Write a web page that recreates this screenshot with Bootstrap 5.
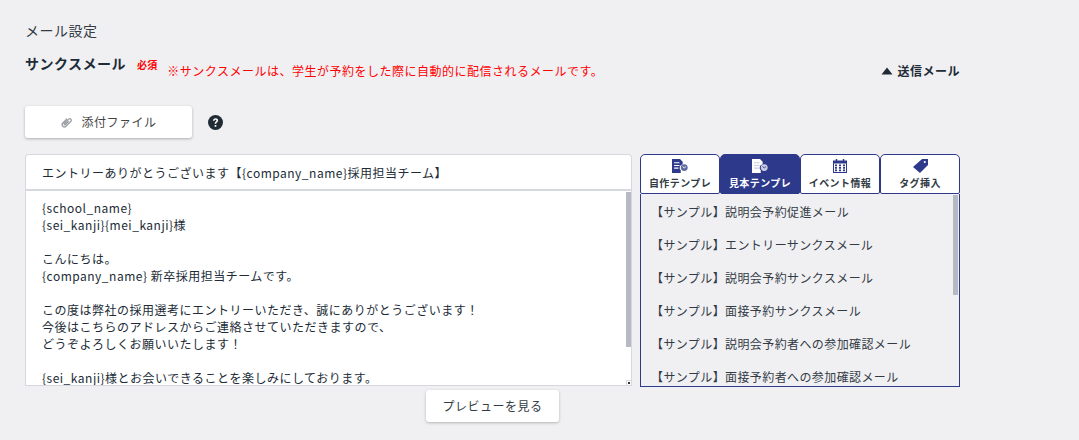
<!DOCTYPE html>
<html lang="ja">
<head>
<meta charset="utf-8">
<title>メール設定</title>
<link href="https://cdn.jsdelivr.net/npm/bootstrap@5.3.0/dist/css/bootstrap.min.css" rel="stylesheet">
<style>
html,body{height:440px;overflow:hidden}
body{background:#f0f0f3;font-family:"Noto Sans CJK JP","Noto Sans",sans-serif;color:#212b36;font-size:12px;letter-spacing:.5px}
.page-wrap{width:960px;padding:21px 0 0 25px}
.sec-title{font-size:14px;line-height:18px;font-weight:400;margin:0 0 14px;color:#333b45;letter-spacing:.5px}
.head-row{height:31px}
.thanks{font-size:14px;line-height:18px;font-weight:700;margin:1px 0 0;letter-spacing:.5px}
.req{font-size:10px;line-height:14px;font-weight:700;color:#f00;margin:5px 0 0 11px;letter-spacing:.1px}
.note{font-size:12px;line-height:17px;color:#f00;margin:9px 0 0 10px}
.send-toggle{font-size:12px;font-weight:700;color:#212b36;line-height:17px;margin-top:9px}
.attach-row{margin-top:22px}
.attach{width:167px;height:32px;background:#fff;border:0;border-radius:3px;box-shadow:0 1px 3px rgba(0,0,0,.28);font-size:12px;color:#444;padding:0;letter-spacing:.5px}
.help{margin-left:16px}
.editor-row{margin-top:16px;gap:8px}
.editor{width:607px}
.subject{height:38px;width:100%;background:#fff;border:1px solid #d5d8de;border-bottom:3px solid #d5d8de;border-radius:4px 4px 0 0;padding:0 16px;font:12px/17px "Noto Sans CJK JP",sans-serif;letter-spacing:.5px;color:#212b36;outline:0}
.body-box{margin-top:-1px}
.body-text{display:block;width:100%;height:195px;background:#fff;border:1px solid #d5d8de;border-top:0;padding:8px 16px 0;font:12px/17px "Noto Sans CJK JP",sans-serif;letter-spacing:.5px;color:#212b36;outline:0;overflow:hidden;resize:none}
.side{width:320px}
.tabs{height:40px}
.tab-btn{flex:1 1 0;height:40px;background:#fff;border:1px solid #2d3a8c;border-radius:5px 5px 2px 2px;color:#333b45;font-size:10px;font-weight:700;line-height:13px;padding:4px 0 0;display:flex;flex-direction:column;align-items:center;letter-spacing:.4px}
.tab-btn.on{background:#2d3a8c;color:#fff}
.tab-btn svg{margin-bottom:3px}
.tpl-list{height:193px;border:1px solid #2d3a8c;border-top:0;overflow:hidden;padding:9px 0 0 10px;background:#f0f0f3}
.tpl-item{font-size:12px;line-height:17px;color:#333b45;margin-bottom:16px;white-space:nowrap;letter-spacing:.4px}
.thumb-a,.thumb-b{position:absolute;background:#b4b9c3;width:5px}
.thumb-a{right:1px;top:1px;height:155px}
.thumb-b{right:1px;top:1px;height:100px}
.grip{position:absolute;right:1px;bottom:1px;width:5px;height:5px;background:#fff;border-left:1px solid #d5d8de;border-top:1px solid #d5d8de}
.grip::after{content:"";position:absolute;left:1px;top:1px;width:2px;height:2px;background:#333}
.preview-row{margin-top:3px}
.preview{width:133px;height:32px;background:#fff;border:0;border-radius:3px;box-shadow:0 1px 3px rgba(0,0,0,.25);font-size:12px;color:#333b45;padding:0;letter-spacing:.5px}
</style>
</head>
<body>
<div class="page-wrap">
  <h2 class="sec-title">メール設定</h2>
  <div class="head-row d-flex align-items-start">
    <h3 class="thanks">サンクスメール</h3>
    <span class="req">必須</span>
    <span class="note">※サンクスメールは、学生が予約をした際に自動的に配信されるメールです。</span>
    <span class="send-toggle ms-auto d-flex align-items-center gap-1">
      <svg width="12" height="8" viewBox="0 0 12 8"><path d="M6 .5 11.500 7.500H.5z" fill="#212b36"/></svg>送信メール
    </span>
  </div>
  <div class="attach-row d-flex align-items-center">
    <button type="button" class="attach d-flex align-items-center justify-content-center gap-2">
      <svg width="13" height="13" viewBox="0 0 13 13" fill="none" stroke="#9b9ea5" stroke-width="1.300"><g transform="rotate(45 6.500 6.500)"><path d="M4.300 3.500v6a2.200 2.200 0 0 0 4.400 0V2.500a1.500 1.500 0 0 0-3 0v6.300a.7.7 0 0 0 1.400 0V4"/></g></svg>添付ファイル
    </button>
    <svg class="help" width="15" height="15" viewBox="0 0 16 16"><circle cx="8" cy="8" r="8" fill="#212b36"/><path d="M5.300 6.200c0-1.700 1.200-2.700 2.800-2.700 1.500 0 2.700 1 2.700 2.300 0 2-2 1.800-2 3.500H7.100c0-2.500 1.900-2.300 1.900-3.500 0-.5-.4-.8-1-.8-.7 0-1 .5-1 1.200zM7.100 10.600h1.800v1.800H7.100z" fill="#fff"/></svg>
  </div>
  <div class="editor-row d-flex align-items-start">
    <div class="editor">
      <input class="subject d-block" type="text" value="エントリーありがとうございます【{company_name}採用担当チーム】">
      <div class="body-box position-relative">
      <textarea class="body-text">{school_name}
{sei_kanji}{mei_kanji}様

こんにちは。
{company_name} 新卒採用担当チームです。

この度は弊社の採用選考にエントリーいただき、誠にありがとうございます！
今後はこちらのアドレスからご連絡させていただきますので、
どうぞよろしくお願いいたします！

{sei_kanji}様とお会いできることを楽しみにしております。</textarea>
      <span class="thumb-a"></span><span class="grip"></span>
      </div>
    </div>
    <div class="side">
      <div class="tabs d-flex">
        <button type="button" class="tab-btn">
          <svg width="16" height="14" viewBox="0 0 15 13"><path d="M0 0h7.500L10 2.500v2.700a3 3 0 0 0-1.800 5.300V13H0z" fill="#2d3a8c"/><path d="M2 3.500h5M2 6h5M2 8.500h4" stroke="#fff"/><circle cx="11.500" cy="8" r="3.200" fill="#5e6a9e"/><path d="M9.800 7l1.700 1.300L13.200 7" fill="none" stroke="#fff" stroke-width=".8"/></svg>自作テンプレ</button>
        <button type="button" class="tab-btn on">
          <svg width="16" height="14" viewBox="0 0 15 13"><path d="M0 0h7.500L10 2.500v2.700a3 3 0 0 0-1.800 5.300V13H0z" fill="#fff"/><path d="M2 3.500h5M2 6h5M2 8.500h4" stroke="#c5c9e0"/><circle cx="11.500" cy="8" r="3.200" fill="#c9cde2"/><path d="M9.800 7l1.700 1.300L13.200 7" fill="none" stroke="#2d3a8c" stroke-width=".8"/></svg>見本テンプレ</button>
        <button type="button" class="tab-btn">
          <svg width="14" height="14" viewBox="0 0 14 14"><path d="M0 1.500h14V14H0z" fill="#2d3a8c"/><path d="M3.500 0v3M10.500 0v3" stroke="#2d3a8c" stroke-width="1.500"/><path d="M1 4.500h12V13H1z" fill="#fff"/><path d="M2 5.500h2v1.800H2zM6 5.500h2v1.800H6zM10 5.500h2v1.800h-2zM2 8h2v1.800H2zM6 8h2v1.800H6zM10 8h2v1.800h-2zM2 10.500h2v1.800H2zM6 10.500h2v1.800H6zM10 10.500h2v1.800h-2z" fill="#2d3a8c"/></svg>イベント情報</button>
        <button type="button" class="tab-btn">
          <svg width="15" height="14" viewBox="0 0 14 13"><path d="M8.500 0H14v5.500L6.500 13 0 7.500z" fill="#2d3a8c"/><circle cx="11" cy="2.800" r="1" fill="#fff"/></svg>タグ挿入</button>
      </div>
      <div class="tpl-list position-relative">
        <span class="thumb-b"></span>
        <div class="tpl-item">【サンプル】説明会予約促進メール</div>
        <div class="tpl-item">【サンプル】エントリーサンクスメール</div>
        <div class="tpl-item">【サンプル】説明会予約サンクスメール</div>
        <div class="tpl-item">【サンプル】面接予約サンクスメール</div>
        <div class="tpl-item">【サンプル】説明会予約者への参加確認メール</div>
        <div class="tpl-item">【サンプル】面接予約者への参加確認メール</div>
      </div>
    </div>
  </div>
  <div class="preview-row d-flex justify-content-center">
    <button type="button" class="preview">プレビューを見る</button>
  </div>
</div>
<script src="https://cdn.jsdelivr.net/npm/bootstrap@5.3.0/dist/js/bootstrap.bundle.min.js"></script>
</body>
</html>
